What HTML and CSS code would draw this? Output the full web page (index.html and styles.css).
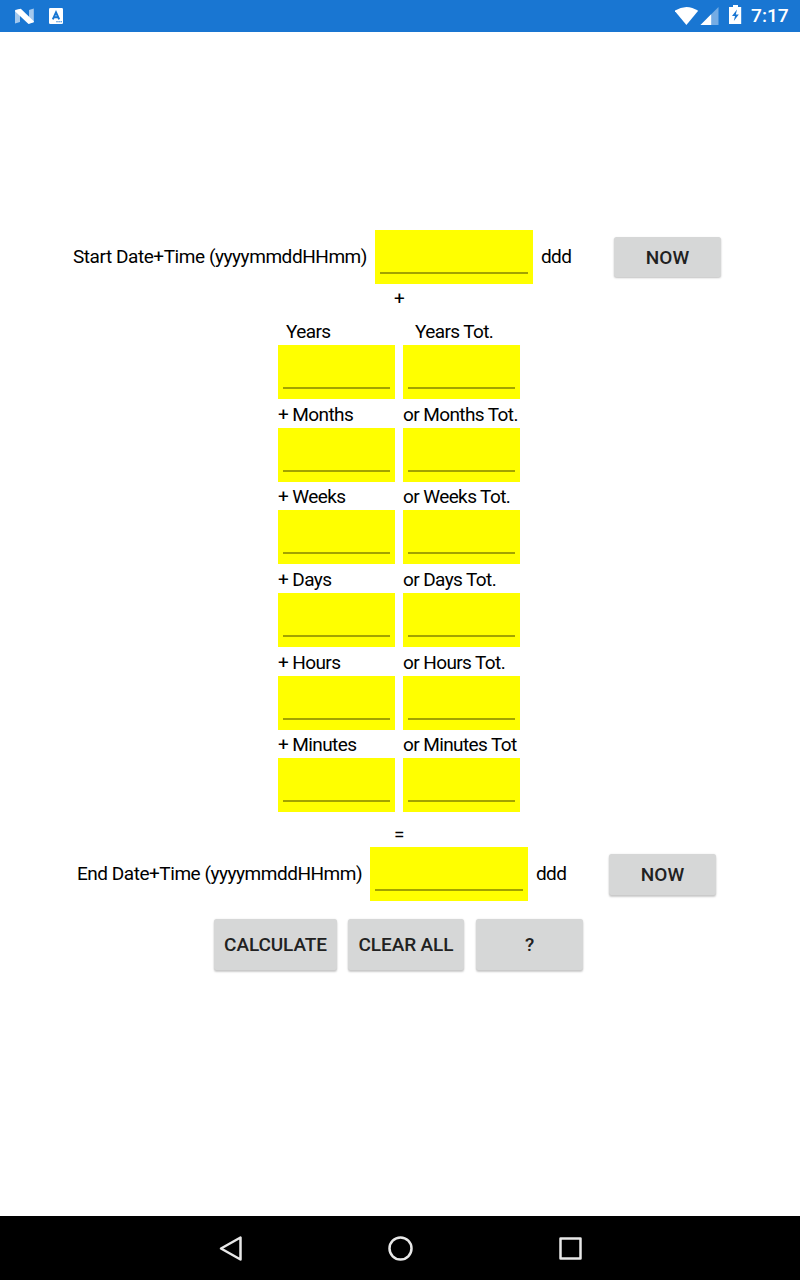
FILE: index.html
```
<!DOCTYPE html>
<html lang="en">
<head>
<meta charset="utf-8">
<title>Date calculator</title>
<link rel="stylesheet" href="styles.css">
</head>
<body>
<header class="status">
  <svg class="status-left" width="80" height="32" viewBox="0 0 80 32">
    <path d="M15 10.500l5-1.500v13l-5 1.500zM29 10l4.800-1.500v13.500l-4.800 1.500z" fill="#fff" opacity=".6"/>
    <path d="M15.200 10L20.800 8.800l13 12.500v1l-5.300 1.700L15.200 11.500z" fill="#fff"/>
    <rect x="49" y="8" width="14" height="16" rx="1.200" fill="#fff"/>
    <path d="M52.800 19.300L56 12.300l3.200 7M53.900 17.300h4.200" fill="none" stroke="#1976d2" stroke-width="2"/>
    <path d="M56.300 21.800h1.400M58.400 21.800h1.400M60.500 21.800h1.400" stroke="#1976d2" stroke-width="1.100"/>
  </svg>
  <svg class="status-right" width="76" height="32" viewBox="0 0 76 32">
    <path d="M-.4 10.800Q11.400 3 23.200 10.800L11.400 25z" fill="#fff"/>
    <path d="M43.500 7v18h-18z" fill="#fff" opacity=".4"/>
    <path d="M36.200 14.300v10.700H25.500z" fill="#fff"/>
    <path d="M58 5h5v2h3.200v17H54V7H58z" fill="#fff"/>
    <path d="M62 9.500l-5 6.500h3l-1.200 5 5-6.500h-3z" fill="#1976d2"/>
  </svg>
  <span class="clock">7:17</span>
</header>
<main class="screen">
  <section class="row start">
    <label class="label start-label">Start Date+Time (yyyymmddHHmm)</label>
    <span class="field wide"></span>
    <span class="label day">ddd</span>
    <button class="button now">NOW</button>
  </section>
  <div class="sign plus">+</div>
  <section class="grid">
    <div class="cell"><label class="label years">Years</label><span class="field"></span></div>
    <div class="cell"><label class="label years-total">Years Tot.</label><span class="field"></span></div>
    <div class="cell"><label class="label">+ Months</label><span class="field"></span></div>
    <div class="cell"><label class="label">or Months Tot.</label><span class="field"></span></div>
    <div class="cell"><label class="label">+ Weeks</label><span class="field"></span></div>
    <div class="cell"><label class="label">or Weeks Tot.</label><span class="field"></span></div>
    <div class="cell"><label class="label">+ Days</label><span class="field"></span></div>
    <div class="cell"><label class="label">or Days Tot.</label><span class="field"></span></div>
    <div class="cell"><label class="label">+ Hours</label><span class="field"></span></div>
    <div class="cell"><label class="label">or Hours Tot.</label><span class="field"></span></div>
    <div class="cell"><label class="label">+ Minutes</label><span class="field"></span></div>
    <div class="cell"><label class="label">or Minutes Tot</label><span class="field"></span></div>
  </section>
  <div class="sign equals">=</div>
  <section class="row end">
    <label class="label end-label">End Date+Time (yyyymmddHHmm)</label>
    <span class="field wide"></span>
    <span class="label day">ddd</span>
    <button class="button now">NOW</button>
  </section>
  <section class="actions">
    <button class="button calculate">CALCULATE</button>
    <button class="button clear">CLEAR ALL</button>
    <button class="button help">?</button>
  </section>
</main>
<nav class="navbar">
  <svg width="26" height="28" viewBox="0 0 26 28"><path d="M22.500 3.500v22L3 14.500z"/></svg>
  <svg width="28" height="28" viewBox="0 0 28 28"><circle cx="14.500" cy="14.500" r="11"/></svg>
  <svg width="26" height="28" viewBox="0 0 26 28"><rect x="4.500" y="4.500" width="20" height="20"/></svg>
</nav>
</body>
</html>
```
FILE: styles.css
```
* { box-sizing: border-box; }
body {
  margin: 0;
  width: 800px;
  height: 1280px;
  display: flex;
  flex-direction: column;
  background: #fff;
  color: #000;
  font-family: Roboto, sans-serif;
  overflow: hidden;
}
.status {
  height: 32px;
  flex: none;
  display: flex;
  background: #1976d2;
  color: #fff;
}
.status-right { margin-left: 595px; }
.clock {
  font-size: 19.200px;
  font-weight: 500;
  line-height: 32px;
}
.screen {
  flex: 1;
  padding-top: 198px;
  display: flex;
  flex-direction: column;
}
.row {
  display: flex;
  height: 54px;
  flex: none;
}
.start { padding-left: 73px; }
.end { padding-left: 77px; }
.label {
  flex: none;
  font-size: 19px;
  letter-spacing: -0.6px;
  white-space: nowrap;
}
.row .label { line-height: 54px; }
.row .start-label { width: 302px; letter-spacing: -0.44px; }
.row .end-label { width: 293px; letter-spacing: -0.47px; }
.day { width: 73px; margin-left: 8px; }
.field {
  flex: none;
  display: block;
  height: 54px;
  padding: 42px 5px 10px;
  background: #ff0;
}
.field::after {
  content: "";
  display: block;
  height: 2px;
  background: #a3a300;
}
.wide { width: 158px; }
.button {
  border: 0;
  padding: 0;
  border-radius: 2.500px;
  background: #d6d7d7;
  box-shadow: 0 2px 2px rgba(0, 0, 0, .2), 0 0 2px rgba(0, 0, 0, .1);
  color: #212121;
  font: 500 19px Roboto, sans-serif;
  letter-spacing: -0.1px;
  white-space: nowrap;
}
.now { width: 107px; height: 41px; margin-top: 7px; letter-spacing: 0; }
.start .now { height: 40px; padding-top: 1px; box-shadow: 0 1px 2px rgba(0, 0, 0, .25); }
.sign {
  flex: none;
  font-size: 19px;
  padding-left: 394px;
}
.plus { height: 32.33px; line-height: 29px; }
.grid {
  flex: none;
  width: 242px;
  margin-left: 278px;
  display: grid;
  grid-template-columns: 117px 117px;
  column-gap: 8px;
  grid-auto-rows: 82.67px;
}
.cell {
  display: flex;
  flex-direction: column;
}
.cell .label {
  height: 28.97px;
  margin-top: -0.3px;
  line-height: 31px;
}
.years { padding-left: 8px; }
.years-total { padding-left: 12px; }
.equals { height: 34.67px; line-height: 46px; }
.actions {
  display: flex;
  margin: 18px 0 0 214px;
}
.actions .button { height: 51px; }
.calculate { width: 123px; }
.clear { width: 116px; margin-left: 11px; }
.help { width: 107px; margin-left: 12px; }
.navbar {
  flex: none;
  height: 64px;
  background: #000;
  display: flex;
  gap: 142px;
  padding: 18px 0 0 218px;
}
.navbar svg {
  flex: none;
  fill: none;
  stroke: #e8e8e8;
  stroke-width: 2.500;
  stroke-linejoin: round;
}
```
